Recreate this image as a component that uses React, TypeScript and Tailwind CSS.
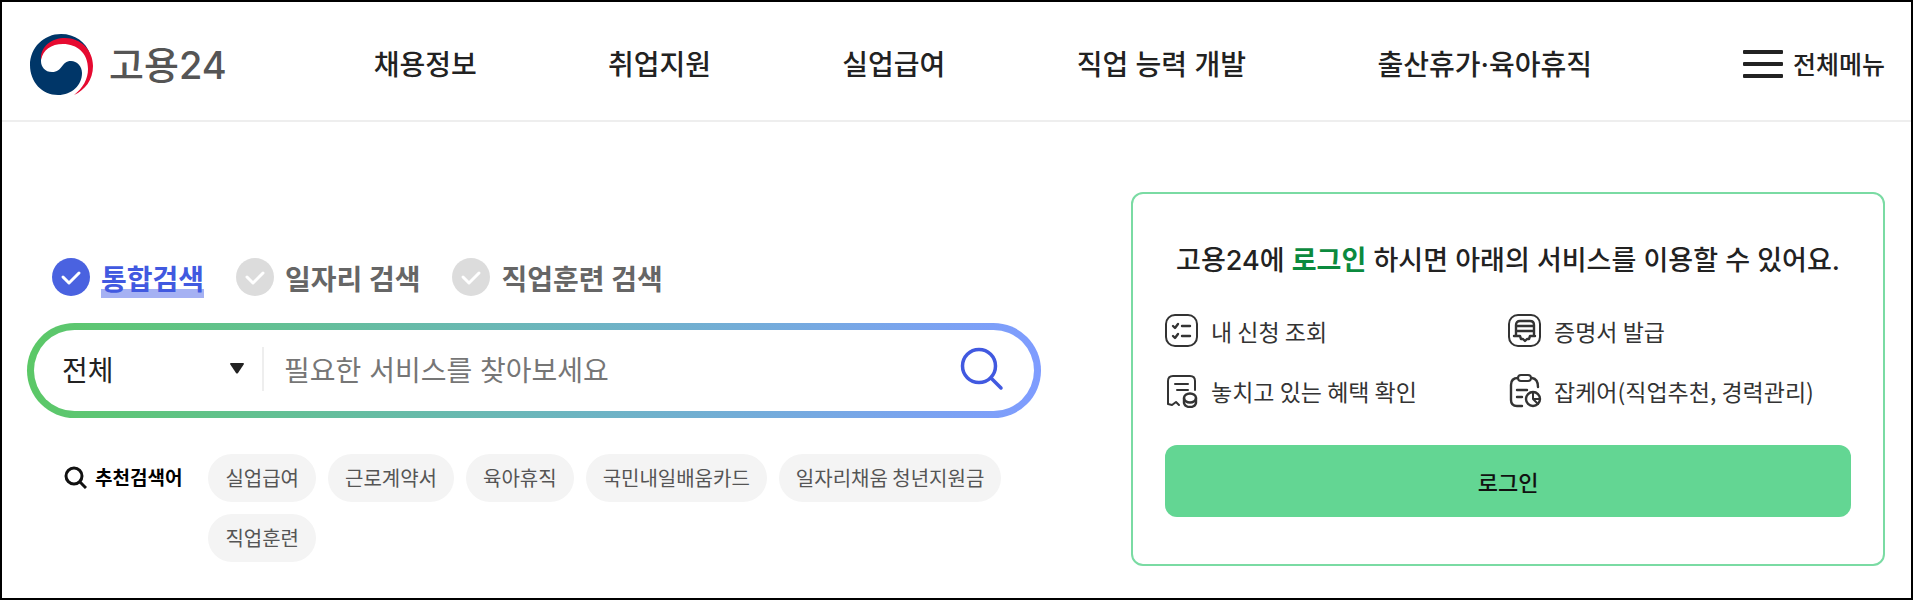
import { useState } from "react";
import type { ReactNode } from "react";

const NAV = ["채용정보", "취업지원", "실업급여", "직업 능력 개발", "출산휴가·육아휴직"];
const TABS = ["통합검색", "일자리 검색", "직업훈련 검색"];
const KEYWORDS = ["실업급여", "근로계약서", "육아휴직", "국민내일배움카드", "일자리채움 청년지원금", "직업훈련"];

function Logo() {
  return (
    <a href="#" className="flex items-center gap-4 text-[#555]">
      <svg viewBox="0 0 63 61" className="h-[61px] w-[63px]" aria-hidden="true">
        <path
          d="M31 0C14 0 0 13.500 0 31C0 48 12 61 28 61C42 61 52 51 52 39C52 32 47 27 41 27C31 27 33 38 22 38C15 38 11 33 11 27C11 14 22 5 36 5C45 5 53 9 60 20C56 8 45 0 31 0Z"
          fill="#003668"
        />
        <path
          d="M11 26C10 12 22 4 35 4C51 4 63 16 63 32C63 46 55 56 44 61C53 54 58 45 58 35C58 19 47 10 33 10C21 10 13 16 11 26Z"
          fill="#e60a30"
        />
      </svg>
      <span className="pt-0.5 font-['Inter','Noto_Sans_CJK_KR',sans-serif] text-[38px] leading-[54px] font-medium">
        고용24
      </span>
    </a>
  );
}

function Icon({ children }: { children: ReactNode }) {
  return (
    <svg
      viewBox="0 0 34 34"
      className="h-[34px] w-[34px] shrink-0"
      fill="none"
      stroke="#333"
      strokeWidth="2"
      strokeLinecap="round"
      strokeLinejoin="round"
      aria-hidden="true"
    >
      {children}
    </svg>
  );
}

const SERVICES = [
  {
    label: "내 신청 조회",
    icon: (
      <Icon>
        <rect x="1" y="1" width="31" height="31" rx="9" />
        <path d="M8 12l2 2 3-4M17 12h8M8 22l2 2 3-4M17 22h8" strokeWidth="2.400" />
      </Icon>
    ),
  },
  {
    label: "증명서 발급",
    icon: (
      <Icon>
        <rect x="1" y="1" width="31" height="31" rx="9" />
        <path d="M6 22h6l1 3h2l2 2 2-2h2l1-3h5M8 22V11q0-4 4-4h10q4 0 4 4v11M9 12h16M9 17h16" strokeWidth="2.400" />
      </Icon>
    ),
  },
  {
    label: "놓치고 있는 혜택 확인",
    icon: (
      <Icon>
        <path d="M30 16V7q0-5-5-5H8Q3 2 3 7v23l4 1 4-3 3 3M10 10h13M12 16h11" />
        <ellipse cx="25" cy="24" rx="6" ry="4.500" strokeWidth="2.400" />
        <path d="M19 24v5q1 4 6 4t6-4v-5" strokeWidth="2.400" />
      </Icon>
    ),
  },
  {
    label: "잡케어(직업추천, 경력관리)",
    icon: (
      <Icon>
        <path d="M10 4q-7 0-7 7v15q0 6 6 6h5M24 4q6 1 6 9M9 16h10M9 23h5" strokeWidth="2.400" />
        <rect x="10" y="1" width="13" height="6" rx="3" />
        <circle cx="25" cy="25" r="7" strokeWidth="2.400" />
        <path d="M25 18v7l5 5M25 25h7" />
      </Icon>
    ),
  },
];

function SearchTabs() {
  const [tab, setTab] = useState(TABS[0]);

  return (
    <div className="flex flex-wrap gap-x-8 pl-[25px] font-['Inter','Noto_Sans_CJK_KR',sans-serif]">
      {TABS.map((t) => (
        <label key={t} className="flex items-start gap-[11px]">
          <span className="relative h-[38px] w-[38px]">
            <input
              type="radio"
              name="searchType"
              checked={tab === t}
              onChange={() => setTab(t)}
              className="block h-[38px] w-[38px] appearance-none rounded-full bg-[#dcdcdc] checked:bg-[#4a62e0]"
            />
            <svg viewBox="0 0 38 38" className="pointer-events-none absolute inset-0" fill="none" aria-hidden="true">
              <path d="M11 19l6 6 10-10" stroke="#fff" strokeWidth="3" strokeLinecap="round" strokeLinejoin="round" />
            </svg>
          </span>
          <span
            className={
              tab === t
                ? "pt-1 text-[28px] leading-9 font-bold text-[#4159e0] shadow-[inset_0_-9px_0_#a5b1f3]"
                : "pt-1 text-[28px] leading-9 font-bold text-[#666]"
            }
          >
            {t}
          </span>
        </label>
      ))}
    </div>
  );
}

function SearchBox() {
  return (
    <form
      onSubmit={(e) => e.preventDefault()}
      className="mt-[25px] rounded-full bg-gradient-to-r from-[#5bc866] to-[#7f9cff] p-[7px]"
    >
      <div className="flex h-[81px] items-center rounded-full bg-white pr-[30px] pb-[3px] pl-7">
        <div className="relative w-[202px] shrink-0 border-r-2 border-[#eee]">
          <select
            aria-label="검색 범위"
            className="block h-11 w-full appearance-none text-[28px] text-[#222] outline-none"
          >
            <option>전체</option>
          </select>
          <svg
            viewBox="0 0 14 11"
            className="pointer-events-none absolute top-4 right-[18px] h-[11px] w-[14px]"
            fill="#222"
            aria-hidden="true"
          >
            <path d="M1 0h12q1 0 1 1L8 10q-1 1-2 0L0 1q0-1 1-1z" />
          </svg>
        </div>
        <input
          type="text"
          aria-label="검색어"
          placeholder="필요한 서비스를 찾아보세요"
          className="ml-5 h-11 min-w-0 flex-1 pt-1 font-['Inter','Noto_Sans_CJK_KR',sans-serif] text-[28px] text-[#222] outline-none placeholder:text-[#767676]"
        />
        <button type="submit" aria-label="검색">
          <svg viewBox="0 0 44 44" className="h-11 w-11" fill="none" stroke="#4159e0" aria-hidden="true">
            <circle cx="19" cy="19" r="16.500" strokeWidth="3.500" />
            <path d="M31 31l10 10" strokeWidth="3.500" strokeLinecap="round" />
          </svg>
        </button>
      </div>
    </form>
  );
}

function Keywords() {
  return (
    <div className="mt-9 flex items-start gap-[26px] pl-[37px]">
      <div className="flex h-[46px] shrink-0 items-center gap-2 text-black">
        <svg viewBox="0 0 23 23" className="h-[23px] w-[23px]" fill="none" stroke="#111" strokeWidth="3" aria-hidden="true">
          <circle cx="10" cy="10" r="8" />
          <path d="M15 15l7 7" />
        </svg>
        <span className="text-[19px] font-bold">추천검색어</span>
      </div>
      <div className="flex flex-wrap gap-3">
        {KEYWORDS.map((k) => (
          <a key={k} href="#" className="h-12 rounded-full bg-[#f4f4f4] px-[17px] text-[20px] leading-12 text-[#555]">
            {k}
          </a>
        ))}
      </div>
    </div>
  );
}

function LoginPanel() {
  return (
    <section className="rounded-xl border-2 border-[#7adba3] px-8 pt-[46px] pb-[47px]">
      <h2 className="text-center font-['Inter','Noto_Sans_CJK_KR',sans-serif] text-[27px] leading-[42px] font-medium text-[#222]">
        고용24에 <strong className="font-bold text-[#0b8a3e]">로그인</strong> 하시면 아래의 서비스를 이용할 수 있어요.
      </h2>
      <ul className="mt-8 grid grid-cols-2 gap-y-[26px]">
        {SERVICES.map((s) => (
          <li key={s.label}>
            <a href="#" className="flex items-center gap-3 text-[23px] leading-[34px] text-[#333]">
              {s.icon}
              {s.label}
            </a>
          </li>
        ))}
      </ul>
      <button type="button" className="mt-[37px] h-18 w-full rounded-xl bg-[#63d693] text-[22px] font-medium text-[#111]">
        로그인
      </button>
    </section>
  );
}

export default function App() {
  return (
    <div className="min-h-screen border-2 border-black bg-white font-['Noto_Sans_CJK_KR',sans-serif]">
      <header className="flex h-[120px] items-center border-b-2 border-[#eee] pt-1.5 pr-[26px] pl-7">
        <Logo />
        <nav className="mr-[151px] ml-[147px] flex flex-1 items-center justify-between pt-0.5 font-['Inter','Noto_Sans_CJK_KR',sans-serif]">
          {NAV.map((n) => (
            <a key={n} href="#" className="text-[28px] font-medium whitespace-nowrap text-[#222]">
              {n}
            </a>
          ))}
        </nav>
        <button type="button" className="flex items-center gap-2.5 text-[25px] font-medium text-[#222]">
          <svg viewBox="0 0 40 29" className="h-[29px] w-10" fill="#222" aria-hidden="true">
            <rect width="40" height="4" rx="1" />
            <rect y="12" width="40" height="4" rx="1" />
            <rect y="24" width="40" height="4" rx="1" />
          </svg>
          전체메뉴
        </button>
      </header>

      <main className="grid grid-cols-[1.345fr_1fr] items-start gap-[90px] pt-[70px] pr-[26px] pb-8 pl-[25px]">
        <div className="pt-[66px]">
          <SearchTabs />
          <SearchBox />
          <Keywords />
        </div>
        <LoginPanel />
      </main>
    </div>
  );
}
